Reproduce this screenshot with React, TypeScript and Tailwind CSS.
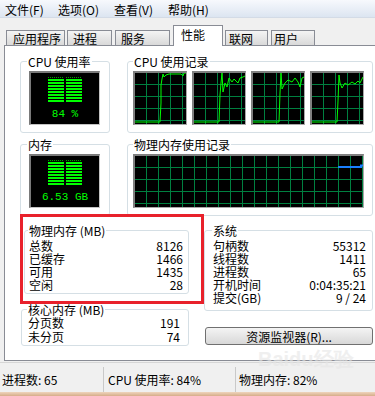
import React from 'react';

type GroupProps = {
  label: string;
  className: string;
  labelClass?: string;
  children?: React.ReactNode;
};

// Win7 style group box, label sits on the top border
const Group = ({ label, className, labelClass = 'ml-[5px]', children }: GroupProps) => (
  <div className={`flex shrink-0 flex-col rounded-[3px] border border-[#d5dfe5] ${className}`}>
    <div className={`-mt-[7px] self-start whitespace-nowrap bg-white px-[1px] text-[12px] leading-[13px] text-black ${labelClass}`}>
      {label}
    </div>
    {children}
  </div>
);

const Bars = () => (
  <div className="flex flex-col gap-[1px]">
    <div className="h-[1px] w-[16px] bg-[repeating-linear-gradient(to_right,#00a000_0px,#00a000_1px,transparent_1px,transparent_2px)]" />
    {Array.from({ length: 8 }).map((_, i) => (
      <div key={i} className="h-[2px] w-[16px] bg-[#00ff00]" />
    ))}
  </div>
);

const Meter = ({ text }: { text: string }) => (
  <div className="ml-[8px] mt-[3px] flex h-[54px] w-[71px] flex-col items-center border-t-2 border-l-2 border-r border-b border-t-[#7a7a7a] border-l-[#7a7a7a] border-r-[#c4c4c4] border-b-[#c4c4c4] bg-black pt-[4px]">
    <div className="flex gap-[2px]">
      <Bars />
      <Bars />
    </div>
    <div className="mt-[6px] whitespace-pre font-['Liberation_Mono',monospace] text-[11px] leading-[12px] text-[#00ff00]">
      {text}
    </div>
  </div>
);

type GraphProps = { className: string; w: number; children?: React.ReactNode };

const Graph = ({ className, w, children }: GraphProps) => (
  <div
    className={`h-[54px] shrink-0 border-t-2 border-l-2 border-r border-b border-t-[#808080] border-l-[#808080] border-r-[#a8a8a8] border-b-[#a8a8a8] bg-black bg-[linear-gradient(to_right,#008040_1px,transparent_1px),linear-gradient(to_bottom,#008040_1px,transparent_1px)] [background-position:11px_11px] [background-size:12px_12px] ${className}`}
  >
    <svg width={w} height={51} viewBox={`0 0 ${w} 51`} className="block">
      {children}
    </svg>
  </div>
);

const cores = [
  '0,49 25,49 26,30 26,12 27,6 28,1 29,4 31,2 34,1 40,1 46,1 48,3 49,0 51,0',
  '0,49 25,49 26,22 27,10 28,0 29,19 31,10 33,14 35,5 38,9 40,6 44,10 46,5 49,4 51,3',
  '0,49 26,49 27,20 28,0 29,16 32,10 35,7 39,9 42,5 45,9 47,14 49,5 51,4',
  '0,49 25,49 26,28 27,2 28,10 30,15 33,10 36,12 40,9 43,11 46,8 48,10 51,4',
];

const Row = ({ k, v }: { k: string; v: string }) => (
  <div className="flex h-[13px] items-center justify-between whitespace-pre text-[12px] leading-[13px] text-black">
    <span>{k}</span>
    <span>{v}</span>
  </div>
);

const tabs = [
  { name: '应用程序', cls: 'ml-0 w-[59px] pl-[6px]' },
  { name: '进程', cls: 'ml-[2px] w-[45px] pl-[5px]' },
  { name: '服务', cls: 'ml-[3px] w-[55px] pl-[5px]' },
];

const tabsAfter = [
  { name: '联网', cls: 'ml-[2px] w-[43px] pl-[3px]' },
  { name: '用户', cls: 'ml-[3px] w-[44px] pl-[2px]' },
];

const Tab = ({ name, cls }: { name: string; cls: string }) => (
  <div
    className={`flex h-[15px] shrink-0 items-center border border-b-0 border-[#898c95] bg-gradient-to-b from-[#f4f4f4] to-[#d9d9d9] text-[12px] leading-[13px] ${cls}`}
  >
    {name}
  </div>
);

export default function App() {
  return (
    <div className="relative flex h-[396px] w-[375px] flex-col overflow-hidden bg-[#f0f0f0] font-['Noto_Sans_CJK_SC',sans-serif] text-black">
      {/* menu */}
      <div className="flex h-[18px] shrink-0 items-center border-b border-[#d3dbe6] bg-gradient-to-b from-[#f7f9fd] to-[#dce5f1] pl-[5px] pt-[1px] text-[12px] leading-[13px]">
        <span className="w-[53px]">文件(F)</span>
        <span className="w-[56px]">选项(O)</span>
        <span className="w-[54px]">查看(V)</span>
        <span>帮助(H)</span>
      </div>

      {/* tabs */}
      <div className="flex h-[27px] shrink-0 items-end pl-[6px]">
        {tabs.map((t) => (
          <Tab key={t.name} {...t} />
        ))}
        <div className="relative z-10 -mb-[1px] ml-[3px] h-[21px] w-[50px] shrink-0 border border-b-0 border-[#898c95] bg-white pl-[7px] pt-[2px] text-[12px] leading-[14px]">
          性能
        </div>
        {tabsAfter.map((t) => (
          <Tab key={t.name} {...t} />
        ))}
      </div>

      {/* panel */}
      <div className="ml-[4px] h-[316px] w-[375px] shrink-0 border border-[#898c95] bg-white">
        <div className="mt-[15px] flex">
          <Group label="CPU 使用率" className="ml-[15px] h-[72px] w-[90px]" labelClass="ml-[6px]">
            <Meter text="84 %" />
          </Group>
          <Group label="CPU 使用记录" className="ml-[17px] h-[72px] w-[246px]">
            <div className="ml-[5px] mt-[3px] flex gap-[5px]">
              {cores.map((p, i) => (
                <Graph key={i} className="w-[54px]" w={51}>
                  <polyline points={p} fill="none" stroke="#00ff00" strokeWidth={1} />
                </Graph>
              ))}
            </div>
          </Group>
        </div>

        <div className="mt-[11px] flex">
          <Group label="内存" className="ml-[15px] h-[72px] w-[90px]" labelClass="ml-[6px]">
            <Meter text="6.53 GB" />
          </Group>
          <Group label="物理内存使用记录" className="ml-[17px] h-[72px] w-[246px]">
            <div className="ml-[5px] mt-[3px] flex">
              <Graph className="w-[231px]" w={228}>
                <polyline points="203,11 226,11 226,9.5 228,9.5" fill="none" stroke="#1a7fff" strokeWidth={2} />
              </Graph>
            </div>
          </Group>
        </div>

        <div className="mt-[14px] flex">
          <div className="flex w-[184px] shrink-0 flex-col items-start">
            <Group label="物理内存 (MB)" className="ml-[19px] h-[64px] w-[165px]" labelClass="ml-[3px]">
              <div className="mt-[2px] flex flex-col pl-[4px] pr-[5px]">
                <Row k="总数" v="8126" />
                <Row k="已缓存" v="1466" />
                <Row k="可用" v="1435" />
                <Row k="空闲" v="28" />
              </div>
            </Group>
            <Group label="核心内存 (MB)" className="ml-[16px] mt-[15px] h-[37px] w-[168px]" labelClass="ml-[5px]">
              <div className="flex flex-col gap-[1px] pl-[6px] pr-[8px]">
                <Row k="分页数" v="191" />
                <Row k="未分页" v="74" />
              </div>
            </Group>
          </div>

          <div className="ml-[15px] flex flex-col">
            <Group label="系统" className="h-[81px] w-[169px]" labelClass="ml-[7px]">
              <div className="mt-[2px] flex flex-col pl-[8px] pr-[6px]">
                <Row k="句柄数" v="55312" />
                <Row k="线程数" v="1411" />
                <Row k="进程数" v="65" />
                <Row k="开机时间" v="0:04:35:21" />
                <Row k="提交(GB)" v="9 / 24" />
              </div>
            </Group>
            <button className="ml-[1px] mt-[16px] flex h-[18px] w-[168px] items-center justify-center rounded-[3px] border border-[#707070] bg-gradient-to-b from-[#f4f4f4] to-[#d8d8d8] text-[12px] leading-[13px] text-black">
              资源监视器(R)...
            </button>
          </div>
        </div>
      </div>

      {/* status bar */}
      <div className="flex h-[31px] shrink-0 flex-col">
        <div className="mt-[1px] h-px bg-[#d6d6d6]" />
        <div className="flex flex-1 items-center text-[12px] leading-[14px]">
          <div className="w-[103px] pl-[2px] pt-[4px]">进程数: 65</div>
          <div className="mt-[4px] w-px self-stretch bg-[#c9c9c9]" />
          <div className="w-[131px] pl-[4px] pt-[4px]">CPU 使用率: 84%</div>
          <div className="mt-[4px] w-px self-stretch bg-[#c9c9c9]" />
          <div className="pl-[3px] pt-[4px]">物理内存: 82%</div>
        </div>
      </div>
      <div className="h-[4px] shrink-0 bg-gradient-to-b from-[#efd5bd] to-[#d6ad8a]" />

      {/* annotation box */}
      <div className="pointer-events-none absolute left-[20px] top-[214px] h-[90px] w-[184px] border-[3px] border-[#e8212b]" />

      {/* watermark */}
      <div className="pointer-events-none absolute left-[258px] top-[347px] font-['Liberation_Sans',sans-serif] text-[20px] font-bold leading-[24px] text-[#e6e6e6] opacity-60">
        Baidu经验
      </div>
    </div>
  );
}
